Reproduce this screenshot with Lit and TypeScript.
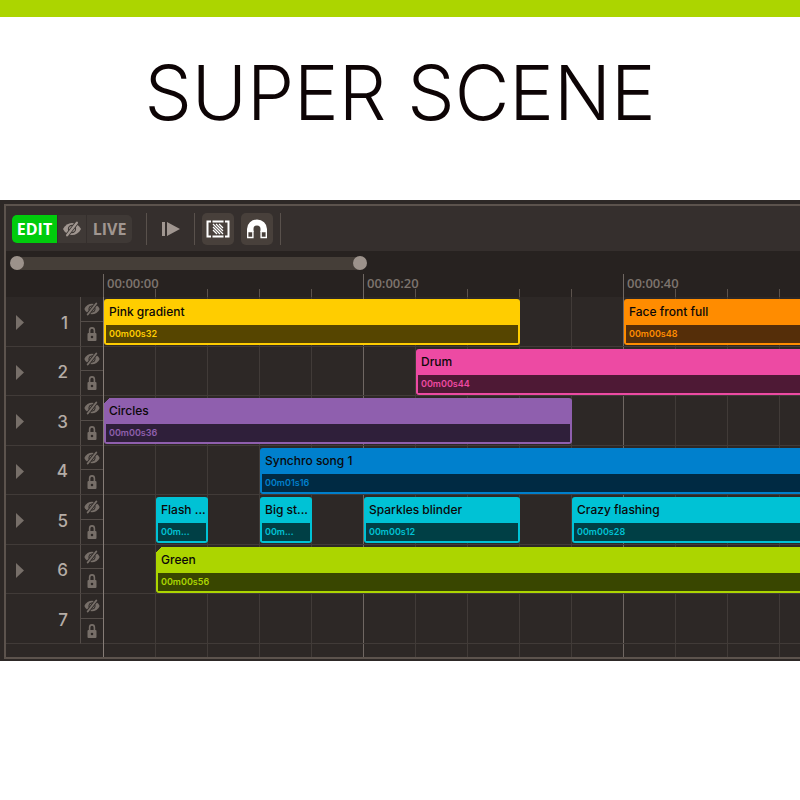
import { LitElement, html, svg, css } from "lit";
import { customElement, property, state } from "lit/decorators.js";
import { classMap } from "lit/directives/class-map.js";
import { styleMap } from "lit/directives/style-map.js";

interface Clip {
  name: string;
  time: string;
  start: number;
  length: number;
  color: string;
  shade: string;
  folded?: boolean;
}

/* Seconds covered by one grid cell of the timeline. */
const STEP = 4;
const CELLS = 32;

const CYAN = { color: "#00c2d5", shade: "#003f45" };

const TRACKS: Clip[][] = [
  [
    { name: "Pink gradient", time: "00m00s32", start: 0, length: 32, color: "#ffcd00", shade: "#564500" },
    { name: "Face front full", time: "00m00s48", start: 40, length: 48, color: "#ff8c00", shade: "#552e09" },
  ],
  [{ name: "Drum", time: "00m00s44", start: 24, length: 44, color: "#ed4aa3", shade: "#4e1935" }],
  [{ name: "Circles", time: "00m00s36", start: 0, length: 36, color: "#8f5fae", shade: "#2f1f3a", folded: true }],
  [{ name: "Synchro song 1", time: "00m01s16", start: 12, length: 76, color: "#0080cd", shade: "#002a43" }],
  [
    { name: "Flash ...", time: "00m...", start: 4, length: 4, ...CYAN },
    { name: "Big st...", time: "00m...", start: 12, length: 4, ...CYAN },
    { name: "Sparkles blinder", time: "00m00s12", start: 20, length: 12, ...CYAN },
    { name: "Crazy flashing", time: "00m00s28", start: 36, length: 28, ...CYAN },
  ],
  [{ name: "Green", time: "00m00s56", start: 4, length: 56, color: "#acd500", shade: "#394600", folded: true }],
  [],
];

const eyeOff = svg`<svg class="eye" viewBox="0 0 18 16" aria-hidden="true">
  <mask id="cut" maskUnits="userSpaceOnUse" x="0" y="0" width="18" height="16">
    <rect width="18" height="16" fill="#fff"/>
    <circle cx="9" cy="8" r="3.600" fill="none" stroke="#000" stroke-width="1.100"/>
    <path stroke="#000" stroke-width="4" d="M16 -1 2 17"/>
  </mask>
  <path fill="currentColor" mask="url(#cut)" d="M0 8C4 0 14 0 18 8 14 16 4 16 0 8z"/>
  <path stroke="currentColor" stroke-width="2.200" stroke-linecap="round" d="M13.900 1.700 4.100 14.300"/>
</svg>`;

const lock = svg`<svg class="lock" viewBox="0 0 10 14" aria-hidden="true">
  <path fill="none" stroke="currentColor" stroke-width="1.600" d="M2.600 7V3.500a2.400 2.600 0 0 1 4.800 0V7"/>
  <path fill="currentColor" fill-rule="evenodd" d="M1.500 6h7a1 1 0 0 1 1 1v6a1 1 0 0 1-1 1h-7a1 1 0 0 1-1-1V7a1 1 0 0 1 1-1zM5 8.700a1.300 1.300 0 0 0 0 2.600 1.300 1.300 0 0 0 0-2.600z"/>
</svg>`;

const arrow = svg`<svg class="arrow" viewBox="0 0 8 15" aria-hidden="true"><path fill="currentColor" d="M0 0 8 7.500 0 15z"/></svg>`;

const playFrom = svg`<svg class="play" viewBox="0 0 18 14" aria-hidden="true"><path fill="currentColor" d="M0 0h3v14H0zM5 0 18 7 5 14z"/></svg>`;

const select = svg`<svg class="select" viewBox="0 0 24 18" aria-hidden="true">
  <path fill="none" stroke="currentColor" stroke-width="2" d="M5 1.500H1.500v15H5M19 1.500h3.500v15H19"/>
  <path stroke="currentColor" stroke-width="2" d="M6.500 1.500h11M6.500 16.500h11"/>
  <path stroke="currentColor" stroke-width="1.200" d="M7 4l10 10M7 7l7 7M7 10l4 4M10 4l7 7M13 4l4 4"/>
</svg>`;

const magnet = svg`<svg class="magnet" viewBox="0 0 20 20" aria-hidden="true">
  <path fill="currentColor" d="M0 13V10a10 9.500 0 0 1 20 0v3h-6.500V10a3.500 3.500 0 0 0-7 0v3z"/>
  <path fill="#48403b" stroke="currentColor" stroke-width="1.400" d="M.7 12.500h5.200v6H.7zM14.100 12.500h5.200v6h-5.200z"/>
</svg>`;

@customElement("timeline-clip")
export class TimelineClip extends LitElement {
  @property({ attribute: false }) clip!: Clip;

  static styles = css`
    :host {
      display: block;
      min-width: 0;
      height: 46px;
    }
    .clip {
      display: flex;
      flex-direction: column;
      box-sizing: border-box;
      width: 100%;
      height: 100%;
      padding: 0 2px 2px;
      border: 0;
      border-radius: 3px;
      overflow: hidden;
      color: #0b0808;
      font: 500 12px/26px Inter, "Liberation Sans", sans-serif;
      text-align: left;
    }
    .name,
    .time {
      display: block;
      padding-left: 3px;
      overflow: hidden;
      white-space: nowrap;
      text-overflow: ellipsis;
    }
    .time {
      font-size: 9px;
      font-weight: 600;
      line-height: 18px;
    }
    .folded {
      border-top-left-radius: 0;
    }
  `;

  render() {
    const { name, time, color, shade, folded } = this.clip;
    const fill = folded ? `linear-gradient(135deg, #2d2826 4px, ${color} 4px)` : color;
    return html`<button class=${classMap({ clip: true, folded: !!folded })} style=${styleMap({ background: fill })}>
      <span class="name">${name}</span>
      <span class="time" style=${styleMap({ background: shade, color })}>${time}</span>
    </button>`;
  }
}

@customElement("timeline-track")
export class TimelineTrack extends LitElement {
  @property({ type: Number }) number = 1;
  @property({ attribute: false }) clips: Clip[] = [];

  static styles = css`
    :host {
      display: flex;
      min-width: 0;
    }
    .head {
      display: flex;
      flex: none;
      box-sizing: border-box;
      width: 98px;
      border-right: 1px solid #857c76;
    }
    .label {
      display: flex;
      flex: 1;
      align-items: center;
      justify-content: space-between;
      padding: 2px 12px 0 10px;
      border-bottom: 1px solid #413b38;
      color: #b5ada6;
      font: 500 17px/20px Inter, "Liberation Sans", sans-serif;
    }
    .number {
      margin-left: auto;
    }
    button {
      display: flex;
      align-items: center;
      justify-content: center;
      padding: 0;
      border: 0;
      background: none;
      color: #776f69;
    }
    .toggles {
      display: grid;
      grid-template-rows: 1fr 1fr;
      width: 22px;
      border-left: 1px solid #544d49;
      border-bottom: 1px solid #413b38;
    }
    .hide {
      border-bottom: 1px solid #544d49;
    }
    .eye {
      width: 16px;
      height: 14px;
    }
    .lock {
      width: 10px;
      height: 14px;
    }
    .arrow {
      width: 8px;
      height: 15px;
    }
    .lane {
      display: grid;
      flex: 1;
      grid-template-rows: 46px;
      min-width: 0;
      padding-top: 2px;
      overflow: hidden;
      border-bottom: 1px solid #413b38;
    }
  `;

  render() {
    return html`<div class="head">
        <div class="label">
          ${this.clips.length ? html`<button aria-label="Expand track ${this.number}">${arrow}</button>` : null}
          <span class="number">${this.number}</span>
        </div>
        <div class="toggles">
          <button class="hide" aria-label="Hide track ${this.number}">${eyeOff}</button>
          <button aria-label="Lock track ${this.number}">${lock}</button>
        </div>
      </div>
      <div class="lane" style=${styleMap({ gridTemplateColumns: `repeat(${CELLS}, 52px)` })}>
        ${this.clips.map(
          (clip) => html`<timeline-clip
            .clip=${clip}
            style=${styleMap({ gridColumn: `${clip.start / STEP + 1} / span ${clip.length / STEP}`, gridRow: "1" })}
          ></timeline-clip>`
        )}
      </div>`;
  }
}

@customElement("app-root")
export class AppRoot extends LitElement {
  @state() private mode: "edit" | "live" = "edit";

  static styles = css`
    :host {
      display: block;
      min-height: 100vh;
      background: #fff;
      overflow: hidden;
    }
    .stripe {
      height: 17px;
      background: #acd500;
    }
    .title {
      margin: 0;
      padding: 30px 0 62px;
      color: #0d0405;
      font: 350 75px/91px Inter, "Liberation Sans", sans-serif;
      text-align: center;
      white-space: nowrap;
    }
    .panel {
      padding: 4px 0 2px 4px;
      background: #2d2826;
    }
    .frame {
      border: 2px solid #5c534d;
      border-right: 0;
    }
    .toolbar {
      display: flex;
      align-items: center;
      height: 45px;
      padding-left: 6px;
      background: #352f2d;
    }
    button {
      display: flex;
      align-items: center;
      justify-content: center;
      padding: 0;
      border: 0;
      background: none;
      color: #a09690;
      font: 700 16px/28px "Open Sans", "Noto Sans", sans-serif;
    }
    .modes {
      display: flex;
      gap: 1px;
      border-radius: 5px;
      overflow: hidden;
    }
    .mode {
      width: 45px;
      height: 28px;
      background: #3f3936;
    }
    .mode.slim {
      width: 28px;
    }
    .mode.on {
      background: #00cc0c;
      color: #fff;
    }
    .eye {
      width: 18px;
      height: 16px;
    }
    .divider {
      width: 1px;
      height: 32px;
      background: #59514c;
    }
    .gap {
      margin-left: 14px;
    }
    .transport {
      width: 47px;
      height: 32px;
    }
    .play {
      width: 18px;
      height: 14px;
    }
    .tools {
      display: flex;
      gap: 7px;
      padding: 0 7px;
    }
    .tool {
      width: 32px;
      height: 32px;
      border-radius: 5px;
      background: #48403b;
      color: #fff;
    }
    .select {
      width: 24px;
      height: 18px;
    }
    .magnet {
      width: 20px;
      height: 20px;
    }
    .timeline {
      background: #272220;
    }
    .range {
      display: grid;
      width: 45%;
      margin-left: 4px;
      padding-top: 5px;
    }
    .bound {
      grid-area: 1 / 1;
      width: 100%;
      min-width: 0;
      height: 14px;
      margin: 0;
      border-radius: 7px;
      background: none;
      appearance: none;
      pointer-events: none;
    }
    .bound.first {
      background: linear-gradient(#453e38, #453e38) no-repeat center / 96% 13px;
    }
    .bound::-webkit-slider-thumb {
      width: 14px;
      height: 14px;
      border-radius: 50%;
      background: #9c928b;
      appearance: none;
      pointer-events: auto;
    }
    .ruler {
      display: flex;
      height: 23px;
      margin-top: 4px;
      padding-left: 97px;
      overflow: hidden;
      color: #7d746e;
      font: 600 13px/19px "Open Sans", "Noto Sans", sans-serif;
    }
    .mark {
      flex: none;
      box-sizing: border-box;
      width: 260px;
      padding-left: 3px;
      border-left: 1px solid #6f6762;
      background: linear-gradient(90deg, transparent 51px, #5c534d 51px) repeat-x 0 15px / 52px 8px;
    }
    .mark:last-child {
      flex: 1;
    }
    .tracks {
      padding-bottom: 13px;
      background:
        linear-gradient(#857c76, #857c76) no-repeat 97px 0 / 1px 100%,
        linear-gradient(#2d2826, #2d2826) no-repeat 0 0 / 97px 100%,
        linear-gradient(90deg, transparent 259px, #6f6762 259px) 98px 0 / 260px 100%,
        linear-gradient(90deg, transparent 51px, #413b38 51px) 98px 0 / 52px 100%,
        #2d2826;
    }
    .track {
      height: 50px;
    }
    .track:nth-child(even) {
      height: 49px;
    }
  `;

  render() {
    const modeClass = (on: boolean) => classMap({ mode: true, on });
    return html`<header>
        <div class="stripe"></div>
        <h1 class="title">SUPER SCENE</h1>
      </header>
      <main class="panel">
        <div class="frame">
          <div class="toolbar" role="toolbar" aria-label="Timeline tools">
            <div class="modes">
              <button class=${modeClass(this.mode === "edit")} @click=${() => (this.mode = "edit")}>EDIT</button>
              <button class="mode slim" aria-label="Blind mode">${eyeOff}</button>
              <button class=${modeClass(this.mode === "live")} @click=${() => (this.mode = "live")}>LIVE</button>
            </div>
            <div class="divider gap"></div>
            <button class="transport" aria-label="Play from start">${playFrom}</button>
            <div class="divider"></div>
            <div class="tools">
              <button class="tool" aria-label="Select range">${select}</button>
              <button class="tool" aria-label="Snap">${magnet}</button>
            </div>
            <div class="divider"></div>
          </div>
          <div class="timeline">
            <div class="range">
              <input class="bound first" type="range" min="0" max="100" value="0" aria-label="View start" />
              <input class="bound" type="range" min="0" max="100" value="100" aria-label="View end" />
            </div>
            <div class="ruler">
              ${["00:00:00", "00:00:20", "00:00:40"].map((time) => html`<div class="mark">${time}</div>`)}
            </div>
            <div class="tracks">
              ${TRACKS.map((clips, i) => html`<timeline-track class="track" .number=${i + 1} .clips=${clips}></timeline-track>`)}
            </div>
          </div>
        </div>
      </main>`;
  }
}
